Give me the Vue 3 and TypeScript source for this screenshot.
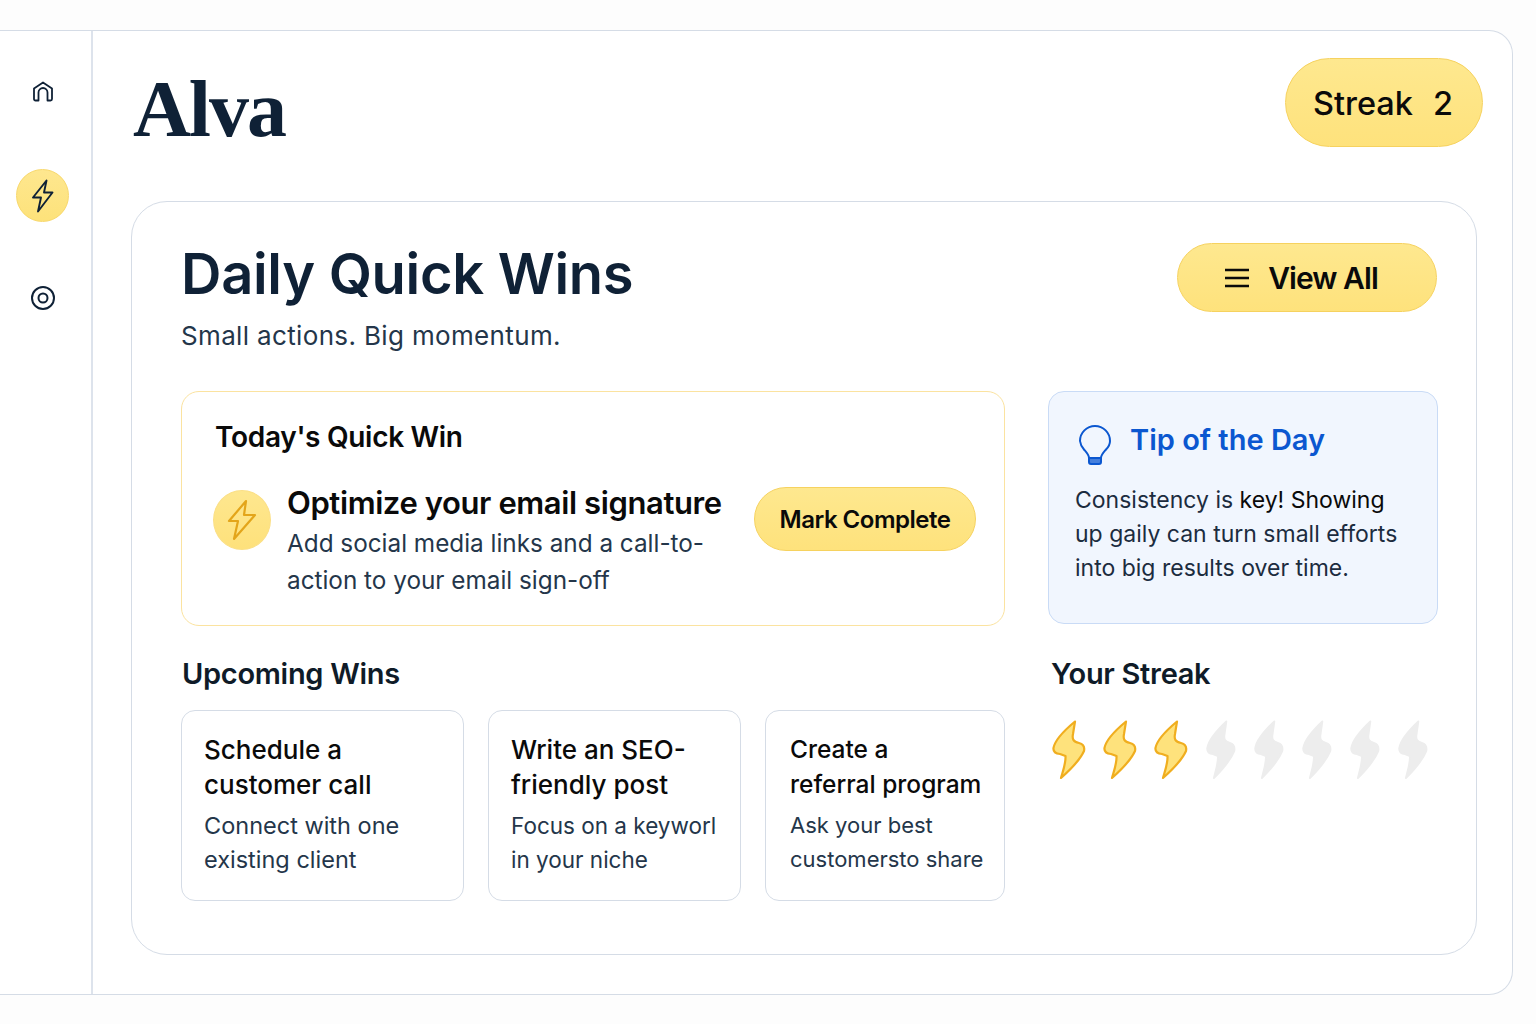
<template>
  <div class="page">
    <div class="frame">
      <aside class="sidebar">
        <button class="nav-btn">
          <svg class="nudge" width="22" height="21" viewBox="0 0 22 21" fill="none" stroke="#0f2136" stroke-width="1.800" stroke-linejoin="round">
            <path d="M2 7.500 11 1.500l9 6V18a1.500 1.500 0 0 1-1.500 1.500H15.500V11.500a4.500 4.500 0 0 0-9 0V19.500H3.500A1.500 1.500 0 0 1 2 18Z" />
          </svg>
        </button>
        <button class="nav-btn nav-active">
          <svg width="24" height="34" viewBox="0 0 24 34" fill="none" stroke="#0f2136" stroke-width="1.900" stroke-linejoin="round">
            <path d="M15.500 1.500 2 18.500h8L7 32.500 21.500 13.500h-8.500Z" />
          </svg>
        </button>
        <button class="nav-btn">
          <svg class="nudge" width="26" height="26" viewBox="0 0 26 26" fill="none" stroke="#0f2136" stroke-width="2">
            <circle cx="13" cy="13" r="11" />
            <circle cx="13" cy="13" r="4.500" />
          </svg>
        </button>
      </aside>

      <main class="main">
        <header class="top">
          <div class="logo">Alva</div>
          <div class="streak-pill"><span>Streak</span><span>{{ streak }}</span></div>
        </header>

        <section class="card">
          <div class="card-head">
            <div>
              <h1>Daily Quick Wins</h1>
              <p class="subtitle">Small actions. Big momentum.</p>
            </div>
            <button class="view-all">
              <svg width="26" height="20" viewBox="0 0 26 20" stroke="#0a0a0a" stroke-width="2.600">
                <path d="M1 2h24M1 10h24M1 18h24" />
              </svg>
              <span>View All</span>
            </button>
          </div>

          <div class="grid">
            <div class="today">
              <h2>Today's Quick Win</h2>
              <div class="today-row">
                <div class="today-icon">
                  <svg width="30" height="42" viewBox="0 0 30 42" fill="none" stroke="#e3a51a" stroke-width="2.200" stroke-linejoin="round">
                    <path d="M19 2 2 22h9l-4 18 21-24H17Z" />
                  </svg>
                </div>
                <div class="today-text">
                  <h3>Optimize your email signature</h3>
                  <p>Add social media links and a call-to-<br />action to your email sign-off</p>
                </div>
                <button class="complete">Mark Complete</button>
              </div>
            </div>

            <div class="tip">
              <div class="tip-head">
                <svg width="34" height="42" viewBox="0 0 34 42" fill="none" stroke="#0b57d0" stroke-width="2">
                  <path d="M11 33c0-3-2-5-5-8.500A15 15 0 0 1 2 16a15 15 0 0 1 30 0c0 3.500-1.500 6-4 8.500-3 3.500-5 5.500-5 8.500Z" />
                  <path d="M11 33h12v4a2 2 0 0 1-2 2h-8a2 2 0 0 1-2-2Z" fill="#0b57d0" fill-opacity=".75" />
                </svg>
                <h2>Tip of the Day</h2>
              </div>
              <p>Consistency is <span class="dark">key! Showing</span><br />up gaily can turn small efforts<br />into big results over time.</p>
            </div>

            <div class="upcoming">
              <h2 class="section-title">Upcoming Wins</h2>
              <div class="win-list">
                <article v-for="win in wins" :key="win.title[0]" class="win" :class="win.cls">
                  <h4>{{ win.title[0] }}<br />{{ win.title[1] }}</h4>
                  <p>{{ win.desc[0] }}<br />{{ win.desc[1] }}</p>
                </article>
              </div>
            </div>

            <div class="your-streak">
              <h2 class="section-title">Your Streak</h2>
              <div class="bolts">
                <svg
                  v-for="n in 8"
                  :key="n"
                  class="bolt"
                  :class="{ off: n > streakDays }"
                  viewBox="0 0 34 60"
                  preserveAspectRatio="none"
                  stroke-linejoin="round"
                >
                  <path d="M23 1.500C14 9 3 19 1.500 28 1 32 4 33.500 8 34l5.500 2C14 43 11 51 9 58c9-8 19-18 23-27 1-5-1-7-5-8-6-1.500-7-4-6-9Z" />
                </svg>
              </div>
            </div>
          </div>
        </section>
      </main>
    </div>
  </div>
</template>

<script setup lang="ts">
const streak = 2
const streakDays = 3

const wins = [
  {
    title: ['Schedule a', 'customer call'],
    desc: ['Connect with one', 'existing client'],
    cls: 'win-a',
  },
  {
    title: ['Write an SEO-', 'friendly post'],
    desc: ['Focus on a keyworl', 'in your niche'],
    cls: 'win-b',
  },
  {
    title: ['Create a', 'referral program'],
    desc: ['Ask your best', 'customersto share'],
    cls: 'win-c',
  },
]
</script>

<style>
html,
body {
  margin: 0;
  background: #fdfdfd;
}
</style>

<style scoped>
.page {
  height: 1024px;
  padding-top: 30px;
  box-sizing: border-box;
  font-family: Inter, 'Liberation Sans', sans-serif;
  color: #0f2136;
  overflow: hidden;
}

.frame {
  display: flex;
  width: 1513px;
  height: 965px;
  box-sizing: border-box;
  background: #fff;
  border: 1px solid #d5dce6;
  border-left: none;
  border-radius: 0 24px 24px 0;
}

.sidebar {
  display: flex;
  flex-direction: column;
  align-items: center;
  flex: none;
  width: 93px;
  box-sizing: border-box;
  padding: 35px 6px 0 0;
  gap: 50px;
  border-right: 2px solid #dde3ec;
}

.nav-btn {
  display: flex;
  align-items: center;
  justify-content: center;
  width: 53px;
  height: 53px;
  padding: 0;
  border: none;
  background: none;
}

.nav-btn .nudge {
  margin-top: -2px;
}

.nav-active {
  border-radius: 50%;
  background: linear-gradient(#fee78f, #fde27a);
  border: 1px solid #f8d86b;
}

.main {
  flex: 1;
  min-width: 0;
  padding: 26px 29px 0 38px;
}

.top {
  display: flex;
  align-items: center;
  justify-content: space-between;
  height: 90px;
  margin-bottom: 54px;
}

.logo {
  font-family: 'Liberation Serif', serif;
  font-weight: 700;
  font-size: 80px;
  letter-spacing: -2px;
  line-height: 90px;
  margin: 14px 0 0 2px;
}

.streak-pill {
  display: flex;
  align-items: center;
  justify-content: center;
  gap: 20px;
  width: 198px;
  height: 89px;
  box-sizing: border-box;
  border: 1.500px solid #f6d25f;
  border-radius: 45px;
  background: linear-gradient(#fee88f, #fee27c);
  font-size: 32.500px;
  font-weight: 500;
  color: #0a0a0a;
  padding: 2px 2px 0 0;
}

.card {
  width: 1346px;
  height: 754px;
  box-sizing: border-box;
  padding: 40px 39px 0 49px;
  border: 1.500px solid #d5dce6;
  border-radius: 36px;
}

.card-head {
  display: flex;
  align-items: flex-start;
  justify-content: space-between;
  height: 149px;
}

h1,
h2,
h3,
h4,
p {
  margin: 0;
}

h1 {
  font-size: 56px;
  font-weight: 600;
  line-height: 64px;
  letter-spacing: -0.300px;
}

.subtitle {
  margin-top: 13px;
  font-size: 26px;
  line-height: 34px;
  letter-spacing: 0.350px;
  color: #24364a;
}

.view-all {
  display: flex;
  align-items: center;
  justify-content: center;
  gap: 18px;
  width: 260px;
  height: 69px;
  margin-top: 1px;
  padding: 0 12px 0 0;
  border: 1.500px solid #f6d25f;
  border-radius: 35px;
  background: linear-gradient(#fee88f, #fee27c);
  font-family: inherit;
  font-size: 30px;
  font-weight: 600;
  letter-spacing: -0.950px;
  color: #0a0a0a;
}

.grid {
  display: grid;
  grid-template-columns: 824px 390px;
  grid-template-rows: 235px auto;
  column-gap: 43px;
}

.today {
  box-sizing: border-box;
  padding: 27px 28px 0 33px;
  border: 1.500px solid #fbe3a0;
  border-radius: 18px;
}

.today h2 {
  font-size: 28px;
  font-weight: 600;
  line-height: 36px;
  color: #0a0a0a;
  letter-spacing: -0.300px;
}

.today-row {
  display: flex;
  align-items: flex-start;
  margin-top: 28px;
}

.today-icon {
  display: flex;
  flex: none;
  align-items: center;
  justify-content: center;
  width: 58px;
  height: 60px;
  box-sizing: border-box;
  margin: 7px 16px 0 -2px;
  border-radius: 50%;
  border: 1px solid #fbdf85;
  background: linear-gradient(#fee78f, #fee17b);
}

.today-text {
  flex: 1;
  min-width: 0;
}

.today-text h3 {
  font-size: 31px;
  font-weight: 600;
  line-height: 40px;
  letter-spacing: -0.400px;
  color: #0a0a0a;
  white-space: nowrap;
}

.today-text p {
  margin-top: 2px;
  font-size: 24.300px;
  line-height: 36.500px;
  color: #24364a;
}

.complete {
  flex: none;
  width: 222px;
  height: 64px;
  padding: 0;
  margin-top: 4px;
  border: 1.500px solid #f6d25f;
  border-radius: 32px;
  background: linear-gradient(#fee88f, #fee27c);
  font-family: inherit;
  font-size: 24px;
  font-weight: 600;
  letter-spacing: -0.500px;
  color: #0a0a0a;
}

.tip {
  height: 233px;
  box-sizing: border-box;
  padding: 28px 26px 0;
  border: 1.500px solid #c9dbf6;
  border-radius: 16px;
  background: #f1f6fe;
}

.tip-head {
  display: flex;
  align-items: center;
  gap: 18px;
  height: 48px;
  padding-left: 3px;
}

.tip-head svg {
  margin-top: 4px;
}

.tip-head h2 {
  font-size: 29px;
  font-weight: 600;
  color: #0b57d0;
  margin-top: -10px;
}

.tip p {
  margin-top: 15px;
  font-size: 23px;
  line-height: 34px;
  color: #1c2c3f;
  white-space: nowrap;
}

.dark {
  color: #0a0a0a;
}

.section-title {
  font-size: 29px;
  font-weight: 600;
  line-height: 36px;
  letter-spacing: -0.300px;
  color: #0f1b28;
}

.upcoming,
.your-streak {
  padding-top: 30px;
}

.upcoming .section-title {
  margin-left: 1px;
}

.your-streak .section-title {
  margin-left: 3px;
}

.win-list {
  display: flex;
  gap: 24px;
  margin-top: 18px;
}

.win {
  box-sizing: border-box;
  height: 191px;
  padding: 21px 8px 0 22px;
  border: 1.500px solid #d5dce6;
  border-radius: 14px;
  white-space: nowrap;
}

.win-a {
  width: 283px;
}

.win-b {
  width: 253px;
}

.win-c {
  width: 240px;
  padding-left: 24px;
}

.win h4 {
  font-size: 26px;
  font-weight: 500;
  line-height: 35px;
  color: #0a0a0a;
}

.win p {
  margin-top: 7px;
  font-size: 23.500px;
  line-height: 33.500px;
  color: #24364a;
}

.win-b p {
  font-size: 22.500px;
}

.win-c h4 {
  font-size: 24.500px;
}

.win-c p {
  font-size: 22px;
}

.bolts {
  display: flex;
  align-items: center;
  gap: 17px;
  margin: 28px 0 0 4px;
}

.bolt {
  flex: none;
  width: 34px;
  height: 60px;
  fill: #fee27c;
  stroke: #f0ae1f;
  stroke-width: 2.200;
}

.bolt.off {
  width: 30px;
  margin-left: 1px;
  fill: #ededed;
  stroke: #ededed;
}
</style>
